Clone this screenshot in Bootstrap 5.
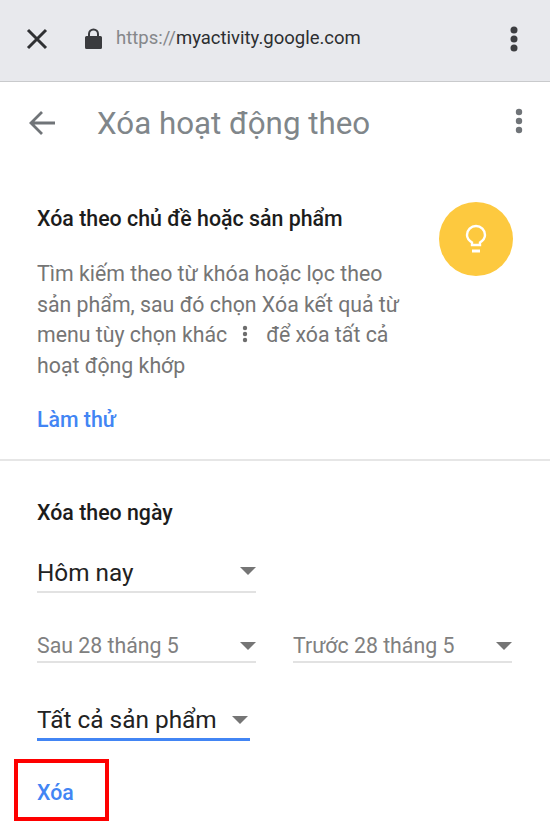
<!DOCTYPE html>
<html lang="vi">
  <head>
    <meta charset="utf-8" />
    <title>Xóa hoạt động theo</title>
    <link
      rel="stylesheet"
      href="https://cdn.jsdelivr.net/npm/bootstrap@5.3.2/dist/css/bootstrap.min.css"
    />
    <style>
      html, body { background: #fff; }
      body { font-family: Roboto, "Liberation Sans", sans-serif; width: 550px; height: 831px; overflow: hidden; }
      .chrome-bar { height: 82px; background: #e8e9ed; border-bottom: 1px solid #c9cacc; padding: 0 31px 4px 26px; }
      .lock-icon { margin-left: 37px; }
      .url-text { font-size: 18.5px; color: #85878a; margin-left: 14px; }
      .url-text b { font-weight: 400; color: #2c2e31; }
      .page-head { height: 82px; padding: 0 27px 0 29px; }
      .page-title { font-size: 31.3px; color: #80868a; margin: 2px 0 0 42px; font-weight: 400; line-height: 1; }
      .tip-block { height: 297px; border-bottom: 2px solid #e6e6e6; padding: 42px 37px 0; }
      .tip-text { width: 375px; }
      .block-title { font-size: 21.35px; font-weight: 500; color: #1c1c1c; margin: 0; line-height: 26px; }
      .tip-desc { font-size: 21.3px; line-height: 30.7px; color: #757575; margin: 27px 0 0; }
      .tip-dots { vertical-align: -1px; margin: 0 18px 0 15px; }
      .blue-link { font-size: 21.3px; font-weight: 500; color: #4285f4; text-decoration: none; line-height: 26px; display: block; }
      .tip-block .blue-link { margin-top: 25px; }
      .bulb-circle { width: 74px; height: 74px; border-radius: 50%; background: #fdc93f; margin-top: -4px; flex: none; }
      .date-block { padding: 39px 37px 0; }
      .pick { border-bottom: 2px solid #e2e2e2; }
      .pick-day { width: 219px; height: 42px; margin-top: 25px; padding-top: 5px; font-size: 24.3px; color: #222; }
      .pick-day .arrow { margin-top: -5px; }
      .pick-date { width: 219px; height: 35px; padding-top: 3px; font-size: 21.3px; color: #808080; }
      .date-row { gap: 37px; margin-top: 35px; }
      .pick-all { width: 213px; height: 39px; margin-top: 39px; font-size: 24.4px; color: #222; border-bottom: 3px solid #4285f4; padding-right: 2px; }
      .arrow { width: 0; height: 0; border-left: 8px solid transparent; border-right: 8px solid transparent; border-top: 8px solid #757575; flex: none; }
      .del-box { width: 95px; height: 62px; border: 4px solid #fe0000; margin: 18px 0 0 -23px; padding: 5px 0 0 19px; }
    </style>
  </head>
  <body>
    <div class="chrome-bar d-flex align-items-center">
      <svg width="22" height="22" viewBox="0 0 22 22" fill="none" stroke="#2f3033" stroke-width="3"><path d="M2 2 20 20M20 2 2 20" /></svg>
      <svg class="lock-icon" width="17" height="22" viewBox="0 0 17 22"><path fill="#3a3b3e" d="M3 8V6a5.500 5.500 0 0 1 11 0v2h1.500A1.500 1.500 0 0 1 17 9.500v10a1.500 1.500 0 0 1-1.500 1.500h-14A1.500 1.500 0 0 1 0 19.500v-10A1.500 1.500 0 0 1 1.500 8zm2 0h7V6a3.500 3.500 0 0 0-7 0z" /></svg>
      <span class="url-text">https://<b>myactivity.google.com</b></span>
      <svg class="ms-auto" width="10" height="26" viewBox="0 0 10 26" fill="#3d3e41"><circle cx="5" cy="4" r="3.500" /><circle cx="5" cy="13" r="3.500" /><circle cx="5" cy="22" r="3.500" /></svg>
    </div>

    <div class="page-head d-flex align-items-center">
      <svg width="26" height="24" viewBox="0 0 26 24" fill="none" stroke="#707478" stroke-width="2.800"><path d="M26 12H2M13 1 2 12l11 11" /></svg>
      <h1 class="page-title">Xóa hoạt động theo</h1>
      <svg class="ms-auto mb-1" width="8" height="26" viewBox="0 0 8 26" fill="#707478"><circle cx="4" cy="4" r="3.200" /><circle cx="4" cy="13" r="3.200" /><circle cx="4" cy="22" r="3.200" /></svg>
    </div>

    <div class="tip-block">
      <div class="d-flex justify-content-between">
        <div class="tip-text">
          <h2 class="block-title">Xóa theo chủ đề hoặc sản phẩm</h2>
          <p class="tip-desc">
            Tìm kiếm theo từ khóa hoặc lọc theo sản phẩm, sau đó chọn Xóa kết quả từ menu tùy chọn khác<svg class="tip-dots" width="6" height="18" viewBox="0 0 6 18" fill="#6d6d6d"><circle cx="3" cy="3" r="2.200" /><circle cx="3" cy="9" r="2.200" /><circle cx="3" cy="15" r="2.200" /></svg>để xóa tất cả hoạt động khớp
          </p>
          <a class="blue-link" href="#">Làm thử</a>
        </div>
        <div class="bulb-circle d-flex align-items-center justify-content-center">
          <svg width="22" height="30" viewBox="0 0 22 30" fill="none" stroke="#fff" stroke-width="2.400"><path d="M7 21v-2.500C4 16.500 2 14 2 11a9 9 0 0 1 18 0c0 3-2 5.500-5 7.500V21z" /><path d="M7 27h8" stroke-width="3" /></svg>
        </div>
      </div>
    </div>

    <div class="date-block">
      <h2 class="block-title">Xóa theo ngày</h2>

      <div class="pick pick-day d-flex align-items-center justify-content-between">
        <span>Hôm nay</span><span class="arrow"></span>
      </div>

      <div class="d-flex date-row">
        <div class="pick pick-date d-flex align-items-center justify-content-between">
          <span>Sau 28 tháng 5</span><span class="arrow"></span>
        </div>
        <div class="pick pick-date d-flex align-items-center justify-content-between">
          <span>Trước 28 tháng 5</span><span class="arrow"></span>
        </div>
      </div>

      <div class="pick-all d-flex align-items-center justify-content-between">
        <span>Tất cả sản phẩm</span><span class="arrow"></span>
      </div>

      <div class="del-box d-flex align-items-center">
        <a class="blue-link" href="#">Xóa</a>
      </div>
    </div>

    <script src="https://cdn.jsdelivr.net/npm/bootstrap@5.3.2/dist/js/bootstrap.bundle.min.js"></script>
  </body>
</html>
